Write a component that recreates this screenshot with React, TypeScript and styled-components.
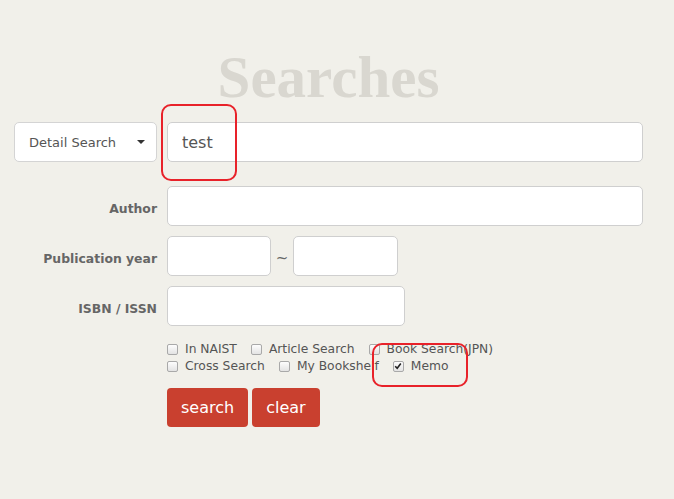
import React, { useState } from "react";
import styled, { createGlobalStyle } from "styled-components";

const Global = createGlobalStyle`
  html, body {
    margin: 0;
    padding: 0;
    background: #f1f0ea;
  }
  body {
    font-family: "DejaVu Sans", "Noto Sans", sans-serif;
    color: #555;
  }
`;

const Page = styled.div`
  position: relative;
  width: 674px;
  height: 499px;
  box-sizing: border-box;
  padding: 47px 31px 0 14px;
`;

const Title = styled.h1`
  margin: 0 0 15px 0;
  height: 60px;
  text-align: center;
  font-family: "Liberation Serif", "Times New Roman", serif;
  font-weight: 700;
  font-size: 59px;
  line-height: 60px;
  color: #d9d7d0;
`;

const Form = styled.div`
  display: grid;
  grid-template-columns: 143px 1fr;
  column-gap: 10px;
  row-gap: 10px;
`;

const FirstRowSpacer = styled.div`
  grid-column: 1 / -1;
  height: 14px;
  margin-top: -10px;
`;

const Label = styled.label`
  display: flex;
  align-items: center;
  justify-content: flex-end;
  box-sizing: border-box;
  padding-top: 5px;
  font-size: 12.4px;
  font-weight: 700;
  color: #666;
  height: 40px;
`;

const Field = styled.div`
  display: flex;
  align-items: center;
`;

const Input = styled.input<{ $w?: number }>`
  box-sizing: border-box;
  height: 40px;
  width: ${p => (p.$w ? `${p.$w}px` : "100%")};
  border: 1px solid #cfcfcf;
  border-radius: 5px;
  background: #fff;
  padding: 0 14px;
  font-family: inherit;
  font-size: 16px;
  color: #555;
  outline: none;
`;

const Tilde = styled.span`
  width: 22px;
  padding-top: 3px;
  text-align: center;
  font-size: 15px;
  color: #666;
`;

const SelectButton = styled.button`
  box-sizing: border-box;
  height: 40px;
  width: 143px;
  display: flex;
  align-items: center;
  justify-content: space-between;
  padding: 0 11px 0 14px;
  border: 1px solid #d4d4d4;
  border-radius: 5px;
  background: #fff;
  font-family: inherit;
  font-size: 13px;
  color: #555;
`;

const Caret = styled.span`
  width: 0;
  height: 0;
  border-top: 4px solid #333;
  border-left: 4px solid transparent;
  border-right: 4px solid transparent;
`;

const Options = styled.div`
  grid-column: 2;
  display: flex;
  flex-direction: column;
  gap: 3px;
  padding-top: 6px;
`;

const OptionRow = styled.div`
  display: flex;
  align-items: center;
  gap: 14px;
`;

const Option = styled.label`
  display: flex;
  align-items: center;
  gap: 7px;
  font-size: 12.3px;
  color: #555;
  line-height: 14px;
`;

const Box = styled.span`
  box-sizing: border-box;
  width: 11px;
  height: 11px;
  border: 1px solid #a9a9a9;
  border-radius: 2px;
  background: linear-gradient(#fdfdfd, #e3e3e3);
  display: flex;
  align-items: center;
  justify-content: center;
`;

const Actions = styled.div`
  grid-column: 2;
  display: flex;
  gap: 4px;
  padding-top: 5px;
`;

const RedButton = styled.button`
  height: 39px;
  padding: 0 14px;
  border: none;
  border-radius: 4px;
  background: #c9402f;
  color: #fff;
  font-family: inherit;
  font-size: 16px;
`;

const Mark = styled.div<{ $x: number; $y: number; $w: number; $h: number }>`
  position: absolute;
  left: ${p => p.$x}px;
  top: ${p => p.$y}px;
  width: ${p => p.$w}px;
  height: ${p => p.$h}px;
  box-sizing: border-box;
  border: 2px solid #e8222a;
  border-radius: 10px;
  pointer-events: none;
`;

const CheckItem: React.FC<{ label: string; on?: boolean }> = ({ label, on }) => (
  <Option>
    <Box>
      {on && (
        <svg width="8" height="8" viewBox="0 0 8 8">
          <path d="M1.2 4.2 L3.2 6.2 L6.8 1.6" stroke="#222" strokeWidth="1.6" fill="none" />
        </svg>
      )}
    </Box>
    {label}
  </Option>
);

export default function App() {
  const [q, setQ] = useState("test");
  return (
    <Page>
      <Global />
      <Title>Searches</Title>
      <Form>
        <SelectButton>
          Detail Search
          <Caret />
        </SelectButton>
        <Input value={q} onChange={e => setQ(e.target.value)} />
        <FirstRowSpacer />
        <Label>Author</Label>
        <Input />
        <Label>Publication year</Label>
        <Field>
          <Input $w={104} />
          <Tilde>~</Tilde>
          <Input $w={105} />
        </Field>
        <Label>ISBN / ISSN</Label>
        <Input $w={238} />
        <Options>
          <OptionRow>
            <CheckItem label="In NAIST" />
            <CheckItem label="Article Search" />
            <CheckItem label="Book Search(JPN)" />
          </OptionRow>
          <OptionRow>
            <CheckItem label="Cross Search" />
            <CheckItem label="My Bookshelf" />
            <CheckItem label="Memo" on />
          </OptionRow>
        </Options>
        <Actions>
          <RedButton>search</RedButton>
          <RedButton>clear</RedButton>
        </Actions>
      </Form>
      <Mark $x={161} $y={104} $w={76} $h={77} />
      <Mark $x={372} $y={343} $w={96} $h={44} />
    </Page>
  );
}
